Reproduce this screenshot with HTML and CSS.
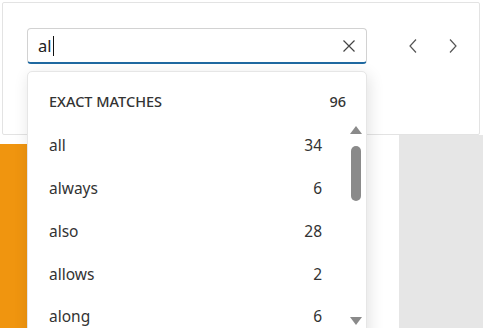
FILE: index.html
```html
<!DOCTYPE html>
<html lang="en">
<head>
<meta charset="UTF-8">
<title>Find</title>
<link rel="stylesheet" href="styles.css">
</head>
<body>
<div class="page">
  <div class="card">
    <div class="search-row">
      <div class="search-box">
        <span class="query">al</span><span class="caret"></span>
        <button class="clear" aria-label="Clear">
          <svg width="12" height="12" viewBox="0 0 12 12"><path d="M0.5 0.5 L11.5 11.5 M11.5 0.5 L0.5 11.5" stroke="#444" stroke-width="1.2" fill="none"/></svg>
        </button>
      </div>
      <button class="nav" aria-label="Previous">
        <svg width="8" height="14" viewBox="0 0 8 14"><path d="M7 0.5 L1 7 L7 13.5" stroke="#555" stroke-width="1.2" fill="none"/></svg>
      </button>
      <button class="nav" aria-label="Next">
        <svg width="8" height="14" viewBox="0 0 8 14"><path d="M1 0.5 L7 7 L1 13.5" stroke="#555" stroke-width="1.2" fill="none"/></svg>
      </button>
    </div>
  </div>
  <div class="workspace">
    <div class="accent"></div>
    <div class="doc"></div>
    <div class="side"></div>
  </div>

  <div class="suggest">
    <div class="suggest-head">
      <span>EXACT MATCHES</span>
      <span>96</span>
    </div>
    <ul class="suggest-list">
      <li><span>all</span><span>34</span></li>
      <li><span>always</span><span>6</span></li>
      <li><span>also</span><span>28</span></li>
      <li><span>allows</span><span>2</span></li>
      <li><span>along</span><span>6</span></li>
    </ul>
    <div class="scrollbar">
      <span class="arrow up"></span>
      <span class="thumb"></span>
      <span class="arrow down"></span>
    </div>
  </div>
</div>
</body>
</html>
```

FILE: styles.css
```css
body {
  margin: 0;
  padding: 0;
  font-family: "Noto Sans", "Open Sans", sans-serif;
  color: #333;
  background-color: #fff;
  overflow: hidden;
}
.page {
  position: relative;
  height: 328px;
  display: flex;
  flex-direction: column;
}
.card {
  margin: 2px 3px 0 2px;
  height: 133px;
  background-color: #fff;
  border: 1px solid #e3e3e3;
  border-radius: 2px;
  box-sizing: border-box;
  padding: 25px 0 0 24px;
}
.search-row {
  display: flex;
  align-items: center;
}
.search-box {
  width: 340px;
  height: 36px;
  box-sizing: border-box;
  border: 1px solid #d2d2d2;
  border-bottom: 2px solid #1f69a1;
  border-radius: 4px;
  display: flex;
  align-items: center;
  padding: 0 10px 0 10px;
}
.query {
  font-size: 16.5px;
  color: #222;
  line-height: 20px;
}
.caret {
  width: 1px;
  height: 20px;
  background-color: #111;
  margin-left: 1px;
}
.clear {
  margin-left: auto;
  margin-right: 1px;
  border: none;
  background: none;
  padding: 0;
  width: 12px;
  height: 12px;
  display: flex;
}
.nav {
  border: none;
  background: none;
  padding: 0;
  width: 8px;
  height: 14px;
  display: flex;
  margin-left: 32px;
}
.search-row .nav:first-of-type {
  margin-left: 42px;
}
.workspace {
  flex: 1;
  display: flex;
}
.accent {
  width: 34px;
  margin-top: 9px;
  background-color: #f0950f;
  border-radius: 0 4px 0 0;
}
.doc {
  flex: 1;
  background-color: #fff;
}
.side {
  width: 84px;
  background-color: #e6e6e6;
}
.suggest {
  position: absolute;
  left: 27px;
  top: 71px;
  width: 340px;
  height: 270px;
  background-color: #fff;
  border: 1px solid #e6e6e6;
  border-radius: 5px;
  box-sizing: border-box;
  box-shadow: 2px 4px 16px rgba(0, 0, 0, 0.12);
}
.suggest-head {
  display: flex;
  justify-content: space-between;
  padding: 19px 20px 0 21px;
  height: 52px;
  box-sizing: border-box;
  font-size: 14.5px;
  line-height: 20px;
  font-weight: 500;
  color: #333;
}
.suggest-list {
  list-style: none;
  margin: 0;
  padding: 0 44px 0 21px;
}
.suggest-list li {
  display: flex;
  justify-content: space-between;
  height: 42.75px;
  align-items: center;
  font-size: 15.5px;
  color: #333;
}
.scrollbar {
  position: absolute;
  right: 4px;
  top: 54px;
  width: 12px;
  height: 199px;
  display: flex;
  flex-direction: column;
  align-items: center;
}
.arrow {
  width: 0;
  height: 0;
  border-left: 6px solid transparent;
  border-right: 6px solid transparent;
}
.arrow.up {
  border-bottom: 8px solid #8a8a8a;
}
.arrow.down {
  border-top: 8px solid #8a8a8a;
  margin-top: auto;
}
.thumb {
  width: 10px;
  height: 55px;
  margin-top: 12px;
  border-radius: 5px;
  background-color: #8a8a8a;
}
```
